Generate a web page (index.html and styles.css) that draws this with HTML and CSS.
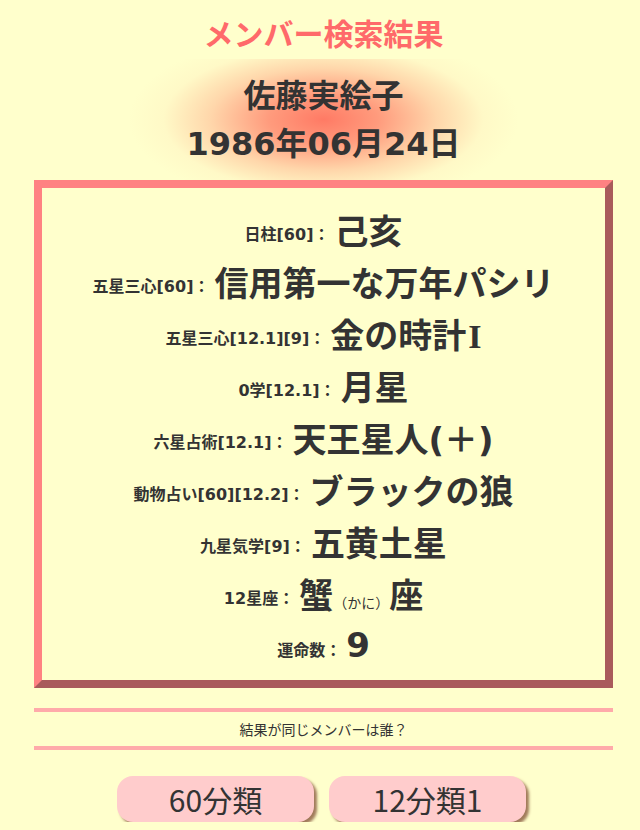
FILE: index.html
```html
<!DOCTYPE html>
<html lang="ja">
<head>
<meta charset="utf-8">
<link rel="stylesheet" href="styles.css">
</head>
<body>
<div class="page">
  <h1 class="title">メンバー検索結果</h1>
  <div class="person">
    <div class="name">佐藤実絵子</div>
    <div class="birth">1986年06月24日</div>
  </div>
  <div class="box">
    <p class="row"><span class="label">日柱[60]：</span><span class="value">己亥</span></p>
    <p class="row"><span class="label">五星三心[60]：</span><span class="value">信用第一な万年パシリ</span></p>
    <p class="row"><span class="label">五星三心[12.1][9]：</span><span class="value">金の時計<span class="roman">I</span></span></p>
    <p class="row"><span class="label">0学[12.1]：</span><span class="value">月星</span></p>
    <p class="row"><span class="label">六星占術[12.1]：</span><span class="value">天王星人(＋)</span></p>
    <p class="row"><span class="label">動物占い[60][12.2]：</span><span class="value">ブラックの狼</span></p>
    <p class="row"><span class="label">九星気学[9]：</span><span class="value">五黄土星</span></p>
    <p class="row"><span class="label">12星座：</span><span class="value">蟹<span class="kana">（かに）</span>座</span></p>
    <p class="row"><span class="label">運命数：</span><span class="value">9</span></p>
  </div>
  <div class="same">結果が同じメンバーは誰？</div>
  <div class="buttons">
    <a class="btn">60分類</a>
    <a class="btn">12分類1</a>
  </div>
</div>
</body>
</html>
```

FILE: styles.css
```css
html, body {
  margin: 0;
  padding: 0;
  background: #ffffcc;
}
body {
  font-family: "DejaVu Sans", "Noto Sans CJK JP", sans-serif;
  color: #333333;
  overflow: hidden;
}
.page {
  width: 579px;
  margin-left: 34px;
  text-align: center;
}
.title {
  margin: 0;
  padding-top: 12px;
  height: 47px;
  font-family: "Noto Sans CJK JP", sans-serif;
  font-size: 30px;
  line-height: 40px;
  font-weight: bold;
  color: #ff6a6a;
}
.person {
  height: 121px;
  display: flex;
  flex-direction: column;
  align-items: center;
  justify-content: center;
  background: radial-gradient(ellipse 195px 88px at 50% 50%, rgba(255,115,95,0.95) 0%, rgba(255,130,105,0.8) 28%, rgba(255,165,130,0.45) 58%, rgba(255,215,170,0.15) 82%, rgba(255,230,180,0) 100%);
  font-weight: bold;
  font-size: 32px;
}
.name {
  font-family: "Noto Sans CJK JP", sans-serif;
  line-height: 40px;
}
.birth {
  line-height: 54px;
  position: relative;
  top: 4px;
}
.box {
  border-style: solid;
  border-width: 8px;
  border-color: #ff8282 #a95b5b #a95b5b #ff8282;
  padding: 15px 0 9px;
}
.row {
  margin: 0;
  height: 52px;
  display: flex;
  align-items: center;
  justify-content: center;
  font-weight: bold;
}
.label {
  font-size: 16px;
  margin-right: 5px;
  position: relative;
  top: 4px;
}
.value {
  font-size: 34px;
}
.roman {
  font-family: "Liberation Serif", serif;
  margin-left: 2px;
}
.kana {
  font-size: 14px;
  font-weight: normal;
}
.same {
  margin-top: 20px;
  border-top: 4px solid #ffaaaa;
  border-bottom: 4px solid #ffaaaa;
  height: 34px;
  line-height: 34px;
  font-family: "Noto Sans CJK JP", sans-serif;
  font-size: 14px;
}
.buttons {
  margin-top: 26px;
  display: flex;
  justify-content: center;
  gap: 15px;
  padding-right: 4px;
}
.btn {
  display: block;
  width: 197px;
  height: 46px;
  line-height: 46px;
  border-radius: 16px;
  background: #ffcccc;
  box-shadow: 3px 3px 3px #a07a5a;
  font-family: "Noto Sans CJK JP", sans-serif;
  font-size: 30px;
  color: #333333;
}
```
